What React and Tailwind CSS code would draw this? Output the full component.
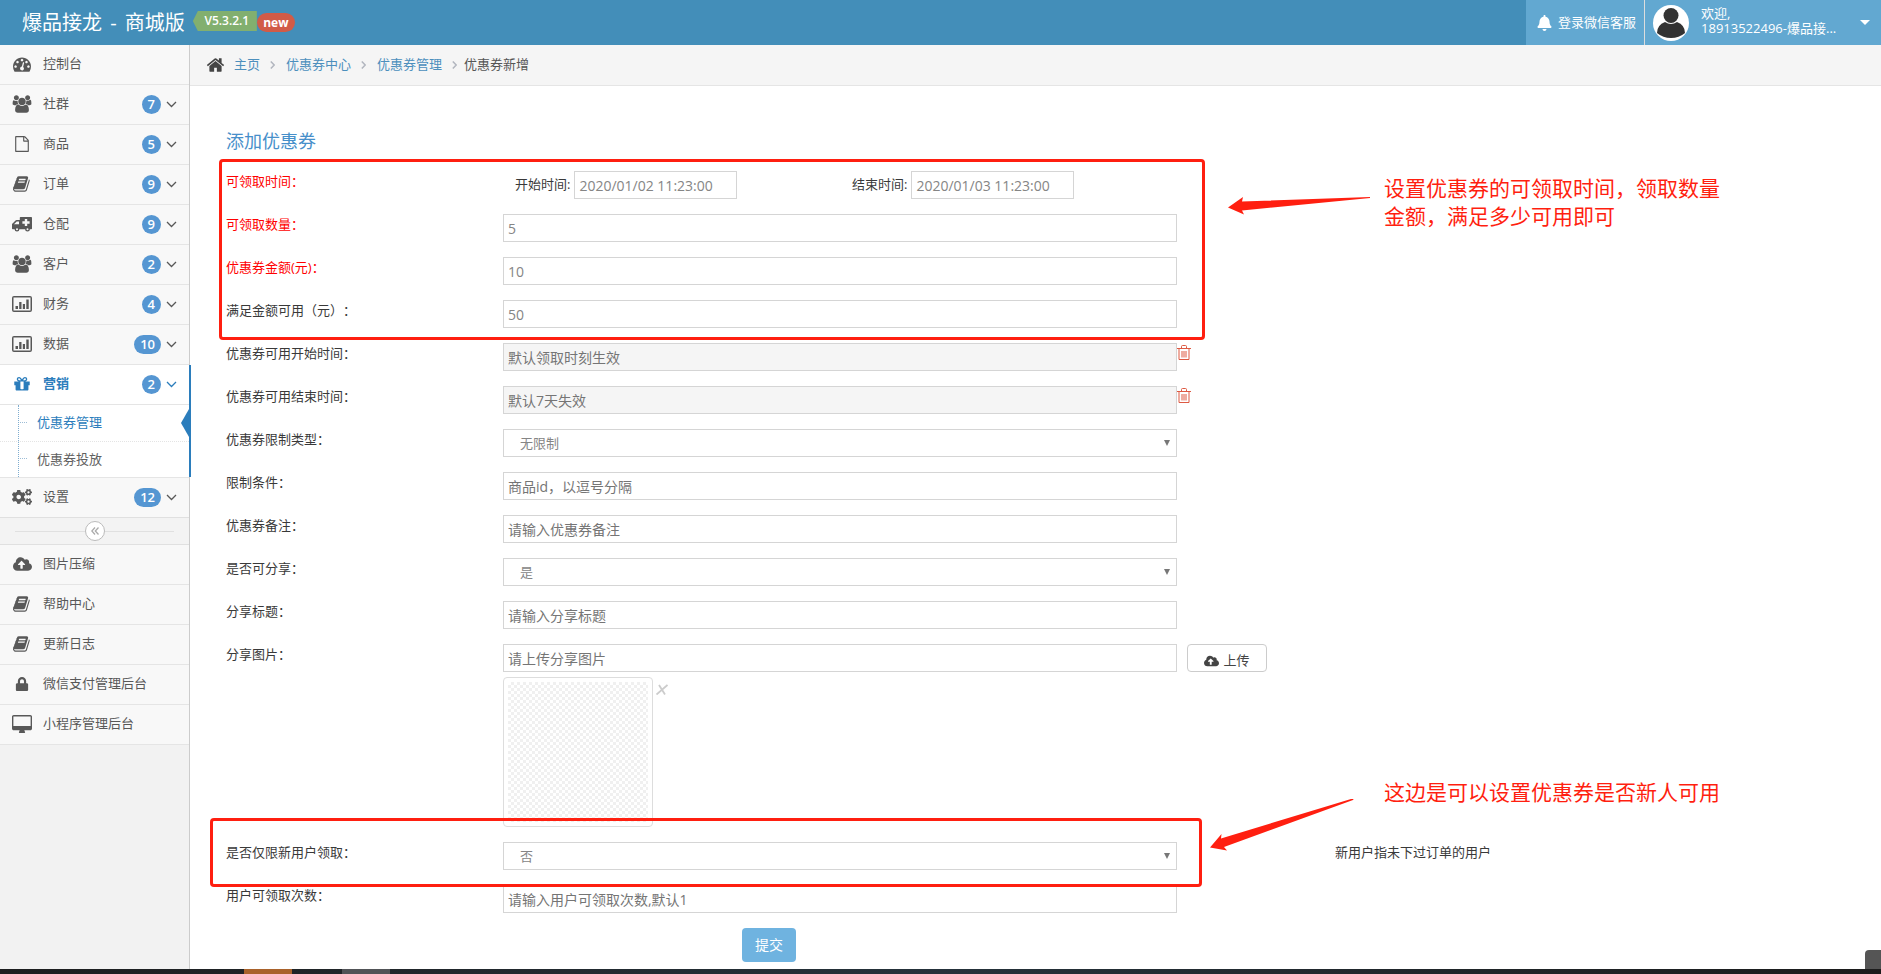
import React from 'react';
import { FaBell, FaCloudUploadAlt, FaCogs, FaLock } from 'react-icons/fa';

const paths = {
  home: ['0 0 1792 1792', 'M1472 992v480q0 26-19 45t-45 19h-384v-384h-256v384h-384q-26 0-45-19t-19-45v-480q0-1 .5-3t.5-3l575-474 575 474q1 2 1 6zm223-69l-62 74q-8 9-21 11h-3q-13 0-21-7l-692-577-692 577q-12 8-24 7-13-2-21-11l-62-74q-8-10-7-23.5t11-21.5l719-599q32-26 76-26t76 26l244 204v-195q0-14 9-23t23-9h192q14 0 23 9t9 23v408l219 182q10 8 11 21.5t-7 23.5z'],
  dashboard: ['0 0 1792 1792', 'M384 1152q0-53-37.5-90.5t-90.5-37.5-90.5 37.5-37.5 90.5 37.5 90.5 90.5 37.5 90.5-37.5 37.5-90.5zm192-448q0-53-37.5-90.5t-90.5-37.5-90.5 37.5-37.5 90.5 37.5 90.5 90.5 37.5 90.5-37.5 37.5-90.5zm428 481l101-382q6-26-7.5-48.5t-38.5-29.5-48 6.5-30 39.5l-101 382q-60 5-107 43.5t-63 98.5q-20 77 20 146t117 89 146-20 89-117q16-60-6-117t-72-91zm660-33q0-53-37.5-90.5t-90.5-37.5-90.5 37.5-37.5 90.5 37.5 90.5 90.5 37.5 90.5-37.5 37.5-90.5zm-640-640q0-53-37.5-90.5t-90.5-37.5-90.5 37.5-37.5 90.5 37.5 90.5 90.5 37.5 90.5-37.5 37.5-90.5zm448 192q0-53-37.5-90.5t-90.5-37.5-90.5 37.5-37.5 90.5 37.5 90.5 90.5 37.5 90.5-37.5 37.5-90.5zm320 448q0 261-141 483-19 29-54 29h-1402q-35 0-54-29-141-221-141-483 0-182 71-348t191-286 286-191 348-71 348 71 286 191 191 286 71 348z'],
  group: ['0 0 2048 1792', 'M657 896q-162 5-265 128h-134q-82 0-138-40.5t-56-118.5q0-353 124-353 6 0 43.5 21t97.5 42.5 119 21.5q67 0 133-23-5 37-5 66 0 159 81 298zm1071 637q0 120-73 189.5t-194 69.5h-874q-121 0-194-69.5t-73-189.5q0-53 3.5-103.5t14-109 26.5-108.5 43-97.5 62-81 85.5-53.5 111.5-20q10 0 43 21.5t73 48 107 48 135 21.5 135-21.5 107-48 73-48 43-21.5q61 0 111.5 20t85.5 53.5 62 81 43 97.5 26.5 108.5 14 109 3.5 103.5zm-1024-1277q0 106-75 181t-181 75-181-75-75-181 75-181 181-75 181 75 75 181zm704 384q0 159-112.5 271.5t-271.5 112.5-271.5-112.5-112.5-271.5 112.5-271.5 271.5-112.5 271.5 112.5 112.5 271.5zm576 225q0 78-56 118.5t-138 40.5h-134q-103-123-265-128 81-139 81-298 0-29-5-66 66 23 133 23 59 0 119-21.5t97.5-42.5 43.5-21q124 0 124 353zm-128-609q0 106-75 181t-181 75-181-75-75-181 75-181 181-75 181 75 75 181z'],
  file: ['0 0 1792 1792', 'M1596 380q28 28 48 76t20 88v1152q0 40-28 68t-68 28h-1344q-40 0-68-28t-28-68v-1600q0-40 28-68t68-28h896q40 0 88 20t76 48zm-444-244v376h376q-10-29-22-41l-313-313q-12-12-41-22zm384 1528v-1024h-416q-40 0-68-28t-28-68v-416h-768v1536h1280z'],
  book: ['0 0 1792 1792', 'M1639 478q40 57 18 129l-275 906q-19 64-76.5 107.5t-122.5 43.5h-923q-77 0-148.5-53.5t-99.5-131.5q-24-67-2-127 0-4 3-27t4-37q1-8-3-21.5t-3-19.5q2-11 8-21t16.5-23.5 16.5-23.5q23-38 45-91.5t30-91.5q3-10 .5-30t-.5-28q3-11 17-28t17-23q21-36 42-92t25-90q1-9-2.500-32t.5-28q4-13 22-30.5t22-22.5q19-26 42.5-84.5t27.5-96.5q1-8-3-25.5t-2-26.5q2-8 9-18t18-23 17-21q8-12 16.5-30.5t15-35 16-36 19.5-32 26.5-23.5 36-11.5 47.5 5.5l-1 3q38-9 51-9h761q74 0 114 56t18 130l-274 906q-36 119-71.5 153.5t-128.5 34.5h-869q-27 0-38 15-11 16-1 43 24 70 144 70h923q29 0 56-15.5t35-41.5l300-987q7-22 5-57 38 15 59 43zm-1064 2q-4 13 2 22.5t20 9.5h608q13 0 25.5-9.5t16.5-22.5l21-64q4-13-2-22.5t-20-9.5h-608q-13 0-25.5 9.5t-16.5 22.5zm-83 256q-4 13 2 22.5t20 9.5h608q13 0 25.5-9.5t16.5-22.5l21-64q4-13-2-22.5t-20-9.5h-608q-13 0-25.5 9.5t-16.5 22.5z'],
  truck: ['0 0 20 18', 'M8.5 2h10.700q.8 0 .8.8v10.700q0 .7-.7.7h-1.400a2.400 2.400 0 0 1-4.800 0H7.400a2.400 2.400 0 0 1-4.800 0H.7q-.7 0-.7-.7V8.900l3.500-3.500Q4 5 4.600 5h3.200V2.700q0-.7.7-.7zM2 9.200h5V6.500H4.700zM12.800 4h2.400v2.300h2.400v2.400h-2.400V11h-2.400V8.700h-2.400V6.300h2.400zM5 13.200a1 1 0 0 0 0 2 1 1 0 0 0 0-2zM15.500 13.200a1 1 0 0 0 0 2 1 1 0 0 0 0-2z'],
  chart: ['0 0 20 16', 'M2 0h16q2 0 2 2v12q0 2-2 2H2q-2 0-2-2V2Q0 0 2 0zM1.5 1.5v13h17v-13zM3.5 10H6v3H3.5zM7.2 6h2.300v7H7.200zM10.800 8H13v5h-2.200zM14.300 3.500h2.400V13h-2.400z'],
  gift: ['0 0 1792 1792', 'M1056 1356v-716h-320v716q0 25 18 38.5t46 13.5h192q28 0 46-13.5t18-38.5zm-456-844h195l-126-161q-26-31-69-31-40 0-68 28t-28 68 28 68 68 28zm688-96q0-40-28-68t-68-28q-43 0-69 31l-125 161h194q40 0 68-28t28-68zm376 256v320q0 14-9 23t-23 9h-96v416q0 40-28 68t-68 28h-1088q-40 0-68-28t-28-68v-416h-96q-14 0-23-9t-9-23v-320q0-14 9-23t23-9h440q-93 0-158.5-65.5t-65.5-158.5 65.5-158.5 158.5-65.5q107 0 168 77l128 165 128-165q61-77 168-77 93 0 158.5 65.5t65.5 158.5-65.5 158.5-158.5 65.5h440q14 0 23 9t9 23z'],
  desktop: ['0 0 1856 1664', 'M1728 992v-832q0-13-9.5-22.5t-22.5-9.5h-1536q-13 0-22.5 9.5t-9.5 22.5v832q0 13 9.5 22.5t22.5 9.5h1536q13 0 22.5-9.5t9.5-22.5zm128-832v1088q0 66-47 113t-113 47h-544q0 37 16 77.5t32 71 16 43.5q0 26-19 45t-45 19h-448q-26 0-45-19t-19-45q0-14 16-44t32-70 16-78h-544q-66 0-113-47t-47-113v-1088q0-66 47-113t113-47h1536q66 0 113 47t47 113z'],
};

const Glyph = ({ name, className }) => (
  <svg viewBox={paths[name][0]} className={className} fill="currentColor" fillRule="evenodd" aria-hidden="true">
    <path d={paths[name][1]} />
  </svg>
);

const icons = {
  dashboard: <Glyph name="dashboard" className="w-[18px] h-[18px]" />,
  group: <Glyph name="group" className="w-5 h-[18px]" />,
  file: <Glyph name="file" className="w-4 h-4" />,
  book: <Glyph name="book" className="w-[18px] h-[18px]" />,
  truck: <Glyph name="truck" className="w-5 h-[18px]" />,
  chart: <Glyph name="chart" className="w-5 h-4" />,
  gift: <Glyph name="gift" className="w-[18px] h-[18px]" />,
  desktop: <Glyph name="desktop" className="w-5 h-[18px]" />,
  cogs: <FaCogs className="w-5 h-5" />,
  upload: <FaCloudUploadAlt className="w-[19px] h-[18px]" />,
  lock: <FaLock className="w-3.5 h-3.5" />,
};

const topMenu = [
  { icon: 'dashboard', text: '控制台' },
  { icon: 'group', text: '社群', count: 7 },
  { icon: 'file', text: '商品', count: 5 },
  { icon: 'book', text: '订单', count: 9 },
  { icon: 'truck', text: '仓配', count: 9 },
  { icon: 'group', text: '客户', count: 2 },
  { icon: 'chart', text: '财务', count: 4 },
  { icon: 'chart', text: '数据', count: 10 },
  { icon: 'gift', text: '营销', count: 2, open: true },
  { icon: 'cogs', text: '设置', count: 12 },
];

const bottomMenu = [
  { icon: 'upload', text: '图片压缩' },
  { icon: 'book', text: '帮助中心' },
  { icon: 'book', text: '更新日志' },
  { icon: 'lock', text: '微信支付管理后台' },
  { icon: 'desktop', text: '小程序管理后台' },
];

const MenuItem = ({ item }) => (
  <li className="border-t border-[#e5e5e5] first:border-t-0">
    <a href="#" className={`flex h-[39px] items-center pl-3 pr-3 pb-px text-[13px] ${item.open ? 'bg-white font-bold text-[#2b7dbc]' : 'bg-[#f8f8f8] text-[#585858]'}`}>
      <span className="mr-[11px] flex w-5 justify-center">{icons[item.icon]}</span>
      <span className="flex-1">{item.text}</span>
      {item.count && (
        <>
          <span className="mr-[5px] flex h-[19px] min-w-[19px] items-center justify-center rounded-full bg-[#5596d2] px-1.5 text-[13px] leading-4 font-semibold text-white">{item.count}</span>
          <svg viewBox="0 0 11 7" className="h-[7px] w-[11px]" fill="none" stroke="currentColor" strokeWidth="1.3" aria-hidden="true">
            <path d="M1 1l4.500 4.500L10 1" />
          </svg>
        </>
      )}
    </a>
    {item.open && <SubMenu />}
  </li>
);

const SubMenu = () => (
  <ul className="relative border-t border-[#e5e5e5] bg-white text-[13px]">
    <li className="relative">
      <a href="#" className="flex h-9 items-center pl-[37px] text-[#2b7dbc]">优惠券管理</a>
      <span className="absolute top-[17px] left-[18px] w-[9px] border-t border-dotted border-[#9dbdd6]" />
      <svg viewBox="0 0 8 28" className="absolute top-1 right-0 h-7 w-2" fill="#2b7dbc" aria-hidden="true">
        <path d="M8 0v28L0 14z" />
      </svg>
    </li>
    <li className="relative border-t border-dotted border-[#e4e4e4]">
      <a href="#" className="flex h-[35px] items-center pl-[37px] text-[#616161]">优惠券投放</a>
      <span className="absolute top-[16px] left-[18px] w-[9px] border-t border-dotted border-[#9dbdd6]" />
    </li>
    <li className="absolute inset-y-0 left-[18px] border-l border-dotted border-[#7fadd0]" aria-hidden="true" />
    <li className="absolute -top-10 bottom-0 -right-[2px] w-[2px] bg-[#2b7dbc]" aria-hidden="true" />
  </ul>
);

const Sidebar = () => (
  <nav className="w-[190px] shrink-0 border-r border-[#ccc] bg-[#f2f2f2]">
    <ul>
      {topMenu.map((item) => <MenuItem key={item.text} item={item} />)}
    </ul>
    <div className="flex h-7 items-center border-y border-[#e0e0e0] bg-[#f3f3f3] px-[15px]">
      <span className="h-px flex-1 bg-[#e0e0e0]" />
      <button aria-label="收起菜单" className="flex h-5 w-5 items-center justify-center rounded-full border border-[#bbb] bg-white text-[#aaa]">
        <svg viewBox="0 0 8 8" className="h-2 w-2" fill="none" stroke="currentColor" strokeWidth="1.3" aria-hidden="true">
          <path d="M4 .5L.8 4 4 7.500M7.500 .5L4.300 4l3.200 3.500" />
        </svg>
      </button>
      <span className="h-px flex-1 bg-[#e0e0e0]" />
    </div>
    <ul className="border-b border-[#e5e5e5]">
      {bottomMenu.map((item) => <MenuItem key={item.text} item={item} />)}
    </ul>
  </nav>
);

const Header = () => (
  <header className="flex h-[45px] items-center bg-[#438eb9] text-white">
    <a href="#" className="pl-[22px] text-[20px] leading-[45px]">爆品接龙 <span className="mx-[3px]">-</span> 商城版</a>
    <span className="ml-2 flex h-5 w-16 items-center justify-center bg-[#82af6f] pb-px pl-1 text-xs font-semibold [clip-path:polygon(0_50%,5px_0,100%_0,100%_100%,5px_100%)] -mt-[3px]">V5.3.2.1</span>
    <span className="flex h-[19px] w-[38px] items-center justify-center rounded-full bg-[#d15b47] text-xs font-bold">new</span>
    <div className="ml-auto flex h-full w-[355px] bg-[#62a8d1] text-[13px]">
      <a href="#" className="flex items-center gap-1.5 border-r border-[#ddd] pl-[11px] pr-2">
        <FaBell className="h-4 w-[15px]" />
        登录微信客服
      </a>
      <a href="#" className="flex flex-1 items-center pl-2 pr-[11px]">
        <svg viewBox="0 0 36 36" className="h-9 w-9" aria-hidden="true">
          <circle cx="18" cy="18" r="18" fill="#fff" />
          <circle cx="18" cy="10.5" r="7.5" fill="#333" />
          <path d="M12 17q-8 3-8 11 6 5 14 5t14-5q0-8-8-11-6 4-12 0z" fill="#333" />
        </svg>
        <span className="ml-3 flex-1 pb-[3px] leading-[15px]">
          <span className="block">欢迎,</span>
          <span className="block whitespace-nowrap">18913522496-爆品接...</span>
        </span>
        <svg viewBox="0 0 10 5" className="h-[5px] w-2.5" fill="#fff" aria-hidden="true"><path d="M0 0h10L5 5z" /></svg>
      </a>
    </div>
  </header>
);

const Separator = () => (
  <svg viewBox="0 0 5 8" className="h-2 w-[5px]" fill="none" stroke="#b2b6bf" strokeWidth="1.5" aria-hidden="true">
    <path d="M.8 .5L4.200 4 .8 7.500" />
  </svg>
);

const Breadcrumb = () => (
  <div className="flex h-[41px] items-center border-b border-[#e5e5e5] bg-[#f5f5f5] pl-4 text-[13px] text-[#4c8fbd]">
    <Glyph name="home" className="mr-[9px] h-5 w-[19px] text-[#444]" />
    <a href="#" className="mr-2.5">主页</a>
    <Separator />
    <a href="#" className="ml-[11px] mr-2.5">优惠券中心</a>
    <Separator />
    <a href="#" className="ml-[11px] mr-2.5">优惠券管理</a>
    <Separator />
    <span className="ml-[7px] text-[#555]">优惠券新增</span>
  </div>
);

const inputStyle = 'h-7 border border-[#d5d5d5] px-1 text-sm text-[#858585] placeholder:text-[#757575] disabled:bg-[#f5f5f5]';

const Row = ({ id, label, red, children, side, hint }) => (
  <div className="grid grid-cols-[277fr_674fr_158fr_546fr] items-start">
    <label htmlFor={id} className={`text-[13px] leading-5 ${red ? 'text-[#f00]' : 'text-[#393939]'}`}>{label}</label>
    <div className="min-w-0">{children}</div>
    <div className="min-w-0">{side}</div>
    <div className="min-w-0 text-[13px] leading-5 text-[#393939]">{hint}</div>
  </div>
);

const TextRow = ({ id, value, placeholder, disabled, ...rest }) => (
  <Row id={id} {...rest}>
    <input id={id} type="text" defaultValue={value} placeholder={placeholder} disabled={disabled} className={`block w-full ${inputStyle}`} />
  </Row>
);

const SelectRow = ({ id, options, ...rest }) => (
  <Row id={id} {...rest}>
    <div className="relative">
      <select id={id} className="block h-7 w-full appearance-none border border-[#d5d5d5] bg-white pl-4 pt-0.5 text-[13px] text-[#858585]">
        {options.map((option) => <option key={option}>{option}</option>)}
      </select>
      <svg viewBox="0 0 6 6" className="pointer-events-none absolute top-[11px] right-[7px] h-1.5 w-1.5" fill="#777" aria-hidden="true">
        <path d="M0 0h6L3 6z" />
      </svg>
    </div>
  </Row>
);

const DateField = ({ id, label, value }) => (
  <div className="flex w-1/2 items-center gap-1 pl-3">
    <label htmlFor={id} className="text-[13px] text-[#393939] whitespace-nowrap">{label}</label>
    <input id={id} type="text" defaultValue={value} className={`w-[163px] ${inputStyle}`} />
  </div>
);

const TrashButton = () => (
  <button type="button" aria-label="清除" className="block pt-0.5 text-[#dd5a43]">
    <svg viewBox="0 0 14 15" className="h-[15px] w-3.5" fill="none" stroke="currentColor" aria-hidden="true">
      <path d="M0 3.500h14M4.500 3V1.500q0-1 1-1h3q1 0 1 1V3M2 3.500v11h10v-11M5 6v6.500M7 6v6.500M9 6v6.500" />
    </svg>
  </button>
);

const CouponForm = () => (
  <form className="flex flex-col gap-[15px] pl-9 pb-[7px]">
    <h4 className="mt-[41px] mb-px text-lg leading-7 text-[#478fca]">添加优惠券</h4>
    <Row id="receive-start" label="可领取时间：" red>
      <div className="flex">
        <DateField id="receive-start" label="开始时间:" value="2020/01/02 11:23:00" />
        <DateField id="receive-end" label="结束时间:" value="2020/01/03 11:23:00" />
      </div>
    </Row>
    <TextRow id="quantity" label="可领取数量：" red value="5" />
    <TextRow id="amount" label="优惠券金额(元)：" red value="10" />
    <TextRow id="threshold" label="满足金额可用（元）：" value="50" />
    <TextRow id="use-start" label="优惠券可用开始时间：" placeholder="默认领取时刻生效" disabled side={<TrashButton />} />
    <TextRow id="use-end" label="优惠券可用结束时间：" placeholder="默认7天失效" disabled side={<TrashButton />} />
    <SelectRow id="limit-type" label="优惠券限制类型：" options={['无限制']} />
    <TextRow id="limit" label="限制条件：" placeholder="商品id，以逗号分隔" />
    <TextRow id="remark" label="优惠券备注：" placeholder="请输入优惠券备注" />
    <SelectRow id="shareable" label="是否可分享：" options={['是', '否']} />
    <TextRow id="share-title" label="分享标题：" placeholder="请输入分享标题" />
    <Row
      id="share-image"
      label="分享图片："
      side={(
        <button type="button" className="ml-2.5 flex h-7 w-20 items-center justify-center gap-1 rounded border border-[#ccc] bg-white pt-1.5 text-[13px] text-[#444]">
          <FaCloudUploadAlt className="h-3.5 w-[15px]" />
          上传
        </button>
      )}
    >
      <input id="share-image" type="text" placeholder="请上传分享图片" className={`block w-full ${inputStyle}`} />
      <div className="mt-[5px] flex items-start">
        <div className="h-[150px] w-[150px] rounded border border-[#ddd] bg-white p-1">
          <div className="h-full bg-[repeating-conic-gradient(#f0f0f0_0_25%,#fff_0_50%)] bg-[length:6px_6px]" />
        </div>
        <button type="button" aria-label="移除图片" className="mt-[7px] ml-[3px]">
          <svg viewBox="0 0 12 11" className="h-[11px] w-3" fill="none" stroke="#ccc" strokeWidth="1.8" aria-hidden="true">
            <path d="M3 1l6 9.500M11.500 1L.5 10.500" />
          </svg>
        </button>
      </div>
    </Row>
    <SelectRow id="new-only" label="是否仅限新用户领取：" options={['否', '是']} hint="新用户指未下过订单的用户" />
    <TextRow id="times" label="用户可领取次数：" placeholder="请输入用户可领取次数,默认1" />
    <div className="grid grid-cols-[516fr_1139fr]">
      <button type="submit" className="col-start-2 h-[34px] w-[54px] rounded bg-[#6fb3e0] text-sm text-white">提交</button>
    </div>
  </form>
);

// red marks drawn over the form
const Annotations = () => (
  <div className="pointer-events-none absolute inset-0 text-[21px] leading-7 text-[#ff1f10]">
    <div className="absolute top-[159px] left-[219px] h-[181px] w-[986px] rounded border-3 border-[#ff1f10]" />
    <div className="absolute top-[818px] left-[210px] h-[69px] w-[992px] rounded border-3 border-[#ff1f10]" />
    <svg viewBox="0 0 142 18" className="absolute top-[197px] left-[1228px] h-[18px] w-[142px]" fill="currentColor" aria-hidden="true">
      <path d="M0 10.500L15 0l-1 4.500L142 0v1L14 13.500l2 4z" />
    </svg>
    <svg viewBox="0 0 146 53" className="absolute top-[798px] left-[1209px] h-[53px] w-[146px]" fill="currentColor" aria-hidden="true">
      <path d="M1 49.500L12.500 36l-.5 4.500L142 1q4-.5 2 1L15 49l3 3.500z" />
    </svg>
    <p className="absolute top-[174px] left-[1384px] whitespace-nowrap">设置优惠券的可领取时间，领取数量<br />金额，满足多少可用即可</p>
    <p className="absolute top-[778px] left-[1384px] whitespace-nowrap">这边是可以设置优惠券是否新人可用</p>
  </div>
);

const App = () => {
  return (
    <div className="relative flex min-h-screen flex-col overflow-hidden bg-white font-['Open_Sans','Noto_Sans_CJK_SC',sans-serif] [text-spacing-trim:space-all]">
      <Header />
      <div className="flex flex-1">
        <Sidebar />
        <main className="min-w-0 flex-1">
          <Breadcrumb />
          <CouponForm />
        </main>
      </div>
      <footer className="relative flex h-[5px] bg-linear-to-r from-[#1d1e1f] via-[#25323b] to-[#1c1c1c]">
        <span className="ml-[244px] w-12 bg-[#a9622b]" />
        <span className="ml-[50px] w-12 bg-[#515357]" />
        <span className="absolute right-0 bottom-full h-[19px] w-4 rounded-tl bg-[#555]" />
      </footer>
      <Annotations />
    </div>
  );
};

export default App;
